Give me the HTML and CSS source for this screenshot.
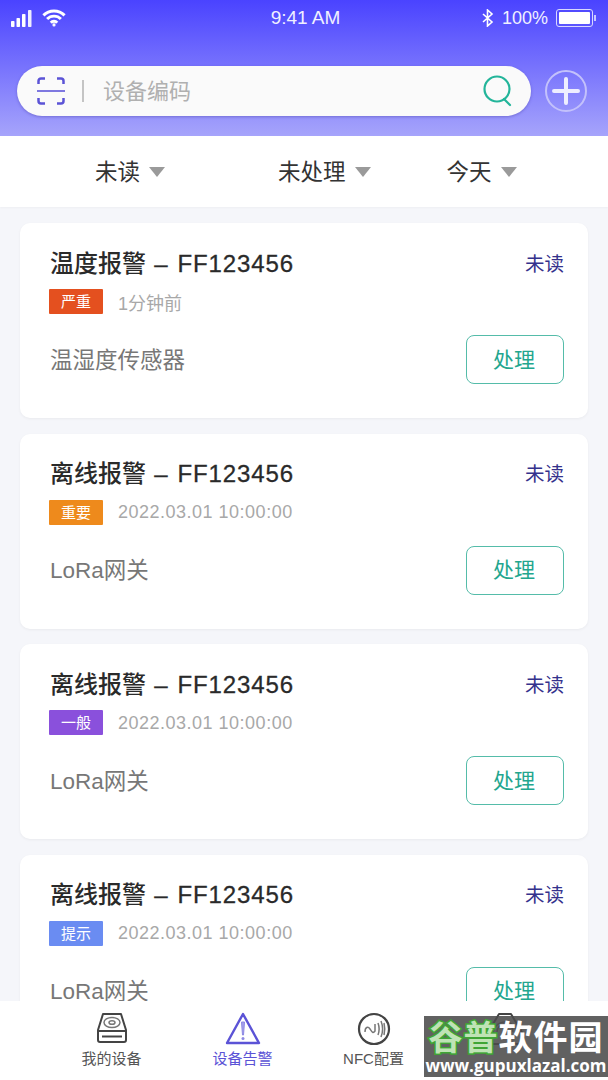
FILE: index.html
```html
<!DOCTYPE html>
<html lang="zh-CN">
<head>
  <meta charset="UTF-8" />
  <meta name="viewport" content="width=device-width, initial-scale=1.0"/>
  <title>设备告警</title>
  <link rel="stylesheet" href="styles.css">
</head>
<body>
  <div class="page">
    <header class="header">
      <div class="status-bar">
        <div class="status-left">
          <svg width="21" height="17" viewBox="0 0 21 17" fill="#fff"><rect x="0" y="11" width="3.500" height="6" rx=".8"/><rect x="5.500" y="8" width="3.500" height="9" rx=".8"/><rect x="11" y="4" width="3.500" height="13" rx=".8"/><rect x="17" y="0" width="3.500" height="17" rx=".8" opacity=".9"/></svg>
          <svg width="24" height="18" viewBox="0 0 22 17" fill="none" stroke="#fff" stroke-width="2.800"><path d="M1 6a14 14 0 0 1 20 0"/><path d="M4.500 9.500a9 9 0 0 1 13 0"/><path d="M8 13a4 4 0 0 1 6 0"/><circle cx="11" cy="15" r="1" fill="#fff" stroke-width="1"/></svg>
        </div>
        <div class="status-time">9:41 AM</div>
        <div class="status-right">
          <svg width="12" height="18" viewBox="0 0 12 18" fill="none" stroke="#fff" stroke-width="1.600"><path d="M1 5l9 8-4.500 4V1L10 5l-9 8"/></svg>
          <span>100%</span>
          <div class="battery"><div class="battery-fill"></div></div>
        </div>
      </div>
      <div class="search-row">
        <div class="search-box">
          <svg class="scan-icon" width="28" height="28" viewBox="0 0 28 28" fill="none" stroke="#5b53d6" stroke-width="2.500"><path d="M1.500 7V4a2.500 2.500 0 0 1 2.500-2.500h4M20 1.500h4a2.500 2.500 0 0 1 2.500 2.500v3M1.500 21v3a2.500 2.500 0 0 0 2.500 2.500h4M20 26.500h4a2.500 2.500 0 0 0 2.500-2.500v-3"/><path d="M0 14h28" stroke="#7e78e0" stroke-width="2"/></svg>
          <div class="search-divider"></div>
          <div class="search-placeholder">设备编码</div>
          <svg class="search-icon" width="30" height="32" viewBox="0 0 30 32" fill="none" stroke="#23b59a" stroke-width="2.200"><circle cx="14" cy="14" r="12.500"/><path d="M21 24l6 6" stroke-linecap="round"/></svg>
        </div>
        <svg class="add-icon" width="44" height="44" viewBox="0 0 44 44" fill="none"><circle cx="22" cy="22" r="20" stroke="#c3c1fb" stroke-width="2"/><path d="M22 10v24M10 22h24" stroke="#eeeeff" stroke-width="4" stroke-linecap="round"/></svg>
      </div>
    </header>

    <nav class="filter-bar">
      <div class="filter filter-read">未读<span class="caret"></span></div>
      <div class="filter filter-state">未处理<span class="caret"></span></div>
      <div class="filter filter-day">今天<span class="caret"></span></div>
    </nav>

    <main class="card-list">
      <section class="card">
        <div class="card-top">
          <div class="card-title">温度报警 <span class="card-code">– FF123456</span></div>
          <div class="card-read">未读</div>
        </div>
        <div class="card-meta">
          <span class="level level-red">严重</span>
          <span class="card-time card-time-short">1分钟前</span>
        </div>
        <div class="card-bottom">
          <div class="card-device">温湿度传感器</div>
          <button class="handle-btn">处理</button>
        </div>
      </section>
      <section class="card">
        <div class="card-top">
          <div class="card-title">离线报警 <span class="card-code">– FF123456</span></div>
          <div class="card-read">未读</div>
        </div>
        <div class="card-meta">
          <span class="level level-orange">重要</span>
          <span class="card-time">2022.03.01 10:00:00</span>
        </div>
        <div class="card-bottom">
          <div class="card-device">LoRa网关</div>
          <button class="handle-btn">处理</button>
        </div>
      </section>
      <section class="card">
        <div class="card-top">
          <div class="card-title">离线报警 <span class="card-code">– FF123456</span></div>
          <div class="card-read">未读</div>
        </div>
        <div class="card-meta">
          <span class="level level-purple">一般</span>
          <span class="card-time">2022.03.01 10:00:00</span>
        </div>
        <div class="card-bottom">
          <div class="card-device">LoRa网关</div>
          <button class="handle-btn">处理</button>
        </div>
      </section>
      <section class="card">
        <div class="card-top">
          <div class="card-title">离线报警 <span class="card-code">– FF123456</span></div>
          <div class="card-read">未读</div>
        </div>
        <div class="card-meta">
          <span class="level level-blue">提示</span>
          <span class="card-time">2022.03.01 10:00:00</span>
        </div>
        <div class="card-bottom">
          <div class="card-device">LoRa网关</div>
          <button class="handle-btn">处理</button>
        </div>
      </section>
    </main>

    <footer class="tab-bar">
      <div class="tab">
        <svg width="32" height="32" viewBox="0 0 32 32" fill="none" stroke="#444" stroke-width="2"><path d="M7 2h18l5 16v10a2 2 0 0 1-2 2H4a2 2 0 0 1-2-2V18z" stroke-linejoin="round"/><path d="M2 19h28"/><ellipse cx="16" cy="10.500" rx="8" ry="5" stroke-width="1.500" stroke="#777"/><ellipse cx="16" cy="10.500" rx="3" ry="1.800" stroke-width="1.500" stroke="#777"/><path d="M6 24.500h20" stroke-width="2"/></svg>
        <div class="tab-label">我的设备</div>
      </div>
      <div class="tab tab-active">
        <svg width="36" height="34" viewBox="0 0 36 34" fill="none" stroke="#5b53d6" stroke-width="2.400"><path d="M18 2L34 31H2z" stroke-linejoin="round"/><path d="M16.500 10h3l-1 13h-1z" fill="#a5a1ea" stroke="#8d88e4" stroke-width="1"/><circle cx="18" cy="26.500" r="1.500" fill="#8d88e4" stroke="none"/></svg>
        <div class="tab-label">设备告警</div>
      </div>
      <div class="tab">
        <svg width="34" height="34" viewBox="0 0 34 34" fill="none" stroke="#444" stroke-width="2.200"><circle cx="17" cy="17" r="15"/><path d="M8 20c0-5 3-6 5-3s3 5 5 2v-7" stroke="#777" stroke-width="1.500"/><path d="M21 11c1.500 4 1.500 8 0 12M24 9c2 5 2 11 0 16M27 11c1 4 1 8 0 12" stroke="#777" stroke-width="1.500"/></svg>
        <div class="tab-label">NFC配置</div>
      </div>
      <div class="tab">
        <svg width="40" height="34" viewBox="0 0 40 34" fill="none" stroke="#444" stroke-width="2"><path d="M14 2h12l12 20v10H2V22z" stroke-linejoin="round"/><path d="M12 20a8 8 0 0 1 16 0M8 22a12 12 0 0 1 24 0" stroke="#777" stroke-width="1.500"/></svg>
        <div class="tab-label">&nbsp;</div>
      </div>
    </footer>

    <div class="watermark">
      <div class="wm-name"><span class="wm-green">谷普</span>软件园</div>
      <div class="wm-url">www.gupuxlazal.com</div>
    </div>
  </div>
</body>
</html>
```

FILE: styles.css
```css
* {
  margin: 0;
  padding: 0;
  box-sizing: border-box;
}

html, body {
  height: 100%;
}

body {
  font-family: "Liberation Sans", "Noto Sans CJK SC", sans-serif;
  background: #f5f6fa;
  overflow: hidden;
}

.page {
  position: relative;
  width: 608px;
  height: 1080px;
  overflow: hidden;
}

.header {
  height: 136px;
  background: linear-gradient(180deg, #4a43ff 0%, #a6a4fb 100%);
}

.status-bar {
  height: 36px;
  padding: 0 15px 0 11px;
  display: grid;
  grid-template-columns: 1fr auto 1fr;
  align-items: center;
  color: #f0f0ff;
  font-size: 18px;
}

.status-left {
  display: flex;
  align-items: center;
  gap: 10px;
}

.status-time {
  font-size: 19px;
  padding-left: 7px;
}

.status-right {
  display: flex;
  align-items: center;
  justify-content: flex-end;
  gap: 8px;
}

.battery {
  position: relative;
  width: 37px;
  height: 18px;
  border: 1px solid #d8d8ff;
  border-radius: 3px;
  padding: 2px;
}

.battery::after {
  content: "";
  position: absolute;
  right: -4px;
  top: 5px;
  width: 2px;
  height: 6px;
  background: #c8c8ff;
}

.battery-fill {
  height: 100%;
  background: #fff;
  border-radius: 1px;
}

.search-row {
  margin-top: 30px;
  padding: 0 20px 0 17px;
  display: flex;
  align-items: center;
  justify-content: space-between;
}

.search-box {
  width: 514px;
  height: 50px;
  padding: 0 18px 0 20px;
  background: #fafafa;
  border-radius: 25px;
  box-shadow: 0 1px 3px rgba(60, 50, 160, 0.4);
  display: flex;
  align-items: center;
}

.search-divider {
  width: 2px;
  height: 22px;
  margin-left: 17px;
  background: #c4c4c4;
}

.search-placeholder {
  margin-left: 19px;
  padding-bottom: 4px;
  font-size: 22px;
  color: #b0b0b0;
  flex: 1;
}

.add-icon {
  flex: none;
}

.filter-bar {
  height: 71px;
  background: #fff;
  display: flex;
  align-items: center;
  font-size: 22.500px;
  color: #333;
  box-shadow: 0 1px 2px rgba(0, 0, 0, 0.03);
}

.filter {
  display: flex;
  align-items: center;
  padding-bottom: 4px;
}

.filter-read {
  margin-left: 95px;
}

.filter-state {
  margin-left: 113px;
}

.filter-day {
  margin-left: 76px;
}

.caret {
  width: 0;
  height: 0;
  margin: 4px 0 0 9px;
  border-left: 8px solid transparent;
  border-right: 8px solid transparent;
  border-top: 10px solid #9a9a9a;
}

.card-list {
  padding: 16px 20px 0;
  display: flex;
  flex-direction: column;
  gap: 15.500px;
}

.card {
  flex: none;
  height: 195px;
  padding: 22px 24px 0 30px;
  background: #fff;
  border-radius: 10px;
  box-shadow: 0 1px 3px rgba(0, 0, 0, 0.05);
}

.card-top {
  display: flex;
  align-items: center;
  justify-content: space-between;
  height: 32px;
}

.card-title {
  font-size: 24px;
  font-weight: 500;
  color: #2a2a2a;
  word-spacing: 1.500px;
}

.card-code {
  letter-spacing: 0.900px;
  -webkit-text-stroke: 0.300px #2a2a2a;
}

.card-read {
  padding-top: 2px;
  font-size: 19.500px;
  color: #34318c;
}

.card-meta {
  margin-top: 12px;
  display: flex;
  align-items: center;
  height: 25px;
}

.level {
  width: 54px;
  height: 25px;
  margin-left: -1px;
  line-height: 25px;
  text-align: center;
  font-size: 15px;
  color: #fff;
  border-radius: 1px;
}

.level-red { background: #e4501f; }
.level-orange { background: #ee8a1c; }
.level-purple { background: #8a50dc; }
.level-blue { background: #6a8cf2; }

.card-time {
  margin-left: 15px;
  padding-top: 1px;
  font-size: 18px;
  letter-spacing: 0.500px;
  color: #a8a8a8;
}

.card-time-short {
  padding-top: 0;
  letter-spacing: 0;
}

.card-bottom {
  margin-top: 21px;
  display: flex;
  align-items: center;
  justify-content: space-between;
}

.card-device {
  padding-bottom: 4px;
  font-size: 22.500px;
  color: #777;
}

.handle-btn {
  width: 98px;
  height: 49px;
  padding: 0 2px 4px 0;
  background: #fff;
  border: 1px solid #55bca9;
  border-radius: 8px;
  font-family: inherit;
  font-size: 21px;
  color: #23a68e;
}

.tab-bar {
  position: absolute;
  left: 0;
  right: 0;
  bottom: 0;
  height: 79px;
  padding: 11px 38px 0 46px;
  background: #fff;
  display: grid;
  grid-template-columns: repeat(4, 1fr);
}

.tab {
  display: flex;
  flex-direction: column;
  align-items: center;
  height: 56px;
  justify-content: space-between;
  font-size: 15px;
  color: #555;
}

.tab-active {
  color: #5b53d6;
}

.watermark {
  position: absolute;
  left: 424px;
  top: 1016px;
  width: 184px;
  height: 61px;
  padding-top: 4px;
  background: rgba(75, 75, 75, 0.88);
  text-align: center;
  overflow: hidden;
}

.wm-name {
  font-size: 34px;
  line-height: 36px;
  font-weight: 700;
  letter-spacing: 1px;
  color: #fff;
  white-space: nowrap;
}

.wm-green {
  color: #bfe3b5;
  -webkit-text-stroke: 3px #3fa535;
  paint-order: stroke fill;
}

.wm-url {
  font-family: "Open Sans", sans-serif;
  font-size: 17px;
  line-height: 20px;
  font-weight: 700;
  color: #fff;
  white-space: nowrap;
}
```
